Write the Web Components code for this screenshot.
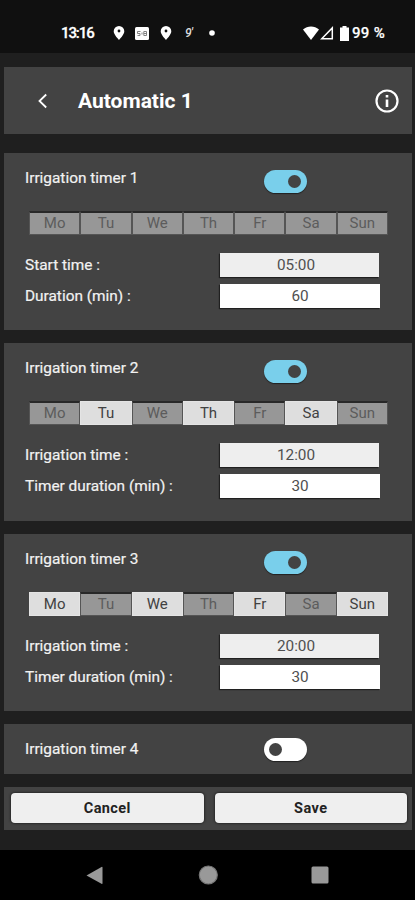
<!DOCTYPE html>
<html lang="en">
<head>
<meta charset="utf-8">
<meta name="viewport" content="width=device-width, initial-scale=1">
<title>Automatic 1</title>
<style>
    body {
        margin: 0;
        background: #1f1f1f;
        font-family: Roboto, "Liberation Sans", sans-serif;
    }
</style>
</head>
<body>
<irrigation-app>
    <status-bar slot="status" time="13:16" battery="99 %"></status-bar>
    <title-bar>Automatic 1</title-bar>
    <timer-card on days="" time="05:00" duration="60" time-label="Start time :" duration-label="Duration (min) :">Irrigation timer 1</timer-card>
    <timer-card on days="Tu,Th,Sa" time="12:00" duration="30">Irrigation timer 2</timer-card>
    <timer-card on days="Mo,We,Fr,Sun" time="20:00" duration="30">Irrigation timer 3</timer-card>
    <timer-card>Irrigation timer 4</timer-card>
    <action-bar slot="footer">
        <action-button>Cancel</action-button>
        <action-button>Save</action-button>
    </action-bar>
    <nav-bar slot="nav"></nav-bar>
</irrigation-app>

<script>
const DAYS = ['Mo', 'Tu', 'We', 'Th', 'Fr', 'Sa', 'Sun'];

function template(html){
    const t = document.createElement('template');
    t.innerHTML = html;
    return t;
}

class BaseElement extends HTMLElement{
    constructor(){
        super();
        this.attachShadow({mode: 'open'});
    }
    connectedCallback(){
        this.shadowRoot.innerHTML = "";
        this.shadowRoot.append(this.constructor.template.content.cloneNode(true));
        this.render();
    }
    $(selector){
        return this.shadowRoot.querySelector(selector);
    }
    render(){}
}

class IrrigationApp extends BaseElement{
    static template = template(`
        <style>
            :host {
                display: flex;
                flex-direction: column;
                box-sizing: border-box;
                width: 415px;
                height: 900px;
                overflow: hidden;
            }
            main {
                flex: 1;
                display: flex;
                flex-direction: column;
                gap: 13px;
                padding: 14px 3px 0 4px;
            }
        </style>
        <slot name="status"></slot>
        <main>
            <slot></slot>
            <slot name="footer"></slot>
        </main>
        <slot name="nav"></slot>
    `);
}

class StatusBar extends BaseElement{
    static template = template(`
        <style>
            :host {
                display: flex;
                align-items: center;
                box-sizing: border-box;
                height: 53px;
                padding: 13px 29px 0 61px;
                background: #101010;
                color: #fff;
                font-size: 15px;
                font-weight: 500;
            }
            .time { width: 52px; letter-spacing: -1.1px; -webkit-text-stroke: .3px; }
            .left { display: flex; align-items: center; flex: 1; }
            .alert { font-size: 12px; width: 23px; margin-left: 13px; letter-spacing: -.5px; margin-right: 1px; color: #ddd; font-style: italic; }
            .battery { letter-spacing: .3px; width: 34px; margin-left: 3px; white-space: nowrap; -webkit-text-stroke: .2px; }
            svg { display: block; fill: currentColor; }
        </style>
        <span class="time"></span>
        <div class="left">
            <svg width="12" height="16" viewBox="0 0 12 16"><path fill-rule="evenodd" d="M6 1a5.300 5.300 0 0 0-5.300 5.300c0 3.500 5.300 8.700 5.300 8.700s5.300-5.200 5.300-8.700a5.300 5.300 0 0 0-5.300-5.300zm0 3.600a1.400 1.400 0 1 1 0 2.800 1.400 1.400 0 0 1 0-2.800z"/></svg>
            <svg width="14" height="13" viewBox="0 0 14 13" style="margin: 0 11px 0 10px"><rect width="14" height="13" rx="1.500"/><path d="M5.500 4.500H2.500v2h2.500v2H2.500M7 5.500v2M11.500 4.500H8.800v4h2.700v-4M8.800 6.500h2.700" fill="none" stroke="#777" stroke-width=".9"/></svg>
            <svg width="12" height="16" viewBox="0 0 12 16"><path fill-rule="evenodd" d="M6 1a5.300 5.300 0 0 0-5.300 5.300c0 3.500 5.300 8.700 5.300 8.700s5.300-5.200 5.300-8.700a5.300 5.300 0 0 0-5.300-5.300zm0 3.600a1.400 1.400 0 1 1 0 2.800 1.400 1.400 0 0 1 0-2.800z"/></svg>
            <span class="alert">9'</span>
            <svg width="6" height="6" viewBox="0 0 6 6"><circle cx="3" cy="3" r="2.800"/></svg>
        </div>
        <svg width="16" height="14" viewBox="0 0 16 14"><path d="M0 3.500C4.500-.6 11.500-.6 16 3.500L8 14z"/></svg>
        <svg width="14" height="14" viewBox="0 0 14 14" style="margin: 0 6px 0 1px"><path d="M1.700 12.800H12.300V1.900z" fill="none" stroke="#fff" stroke-width="1.500"/></svg>
        <svg width="9" height="15" viewBox="0 0 9 15"><path d="M2.500 0h4v1.500H9V15H0V1.500h2.500z"/></svg>
        <span class="battery"></span>
    `);
    render(){
        this.$('.time').textContent = this.getAttribute('time');
        this.$('.battery').textContent = this.getAttribute('battery');
    }
}

class TitleBar extends BaseElement{
    static template = template(`
        <style>
            :host {
                display: flex;
                align-items: center;
                box-sizing: border-box;
                height: 67px;
                margin-bottom: 6px;
                padding: 0 13px 0 33px;
                background: #434343;
                color: #fff;
            }
            h1 {
                flex: 1;
                margin: 0;
                padding-left: 30px;
                font-size: 21px;
                font-weight: 700;
                line-height: 24px;
            }
            svg { display: block; fill: none; stroke: #fff; }
        </style>
        <svg width="11" height="16" viewBox="0 0 11 16"><path d="M9.200 1.500 2.500 8l6.700 6.500" stroke-width="1.800"/></svg>
        <h1><slot></slot></h1>
        <svg width="24" height="24" viewBox="0 0 24 24"><circle cx="12" cy="12" r="10.500" stroke-width="2.200"/><path d="M12 10.500V18M12 6v2.600" stroke-width="2.600"/></svg>
    `);
}

class ToggleSwitch extends BaseElement{
    static template = template(`
        <style>
            :host {
                display: flex;
                align-items: center;
                box-sizing: border-box;
                width: 43px;
                height: 23px;
                padding: 0 5px;
                border-radius: 12px;
                background: #fff;
                box-shadow: 0 1px 1px #222;
            }
            :host([on]) {
                justify-content: flex-end;
                padding-right: 6px;
                background: #79cfeb;
            }
            i {
                width: 13px;
                height: 13px;
                border-radius: 50%;
                background: #434343;
            }
        </style>
        <i></i>
    `);
}

class DayPicker extends BaseElement{
    static template = template(`
        <style>
            :host {
                display: grid;
                grid-template-columns: repeat(7, 1fr);
                height: 24px;
                color: #5c5c5c;
                font-size: 15px;
                text-align: center;
            }
            span {
                box-sizing: border-box;
                border: 1px solid #555;
                border-top: 2px solid #282828;
                background: #979797;
                line-height: 20px;
            }
            span.active {
                border: 1px solid #e4e4e4;
                background: #dedede;
                color: #414141;
                line-height: 22px;
            }
        </style>
    `);
    render(){
        const active = (this.getAttribute('days') || '').split(',');
        for(const day of DAYS){
            const cell = document.createElement('span');
            cell.textContent = day;
            cell.classList.toggle('active', active.includes(day));
            this.shadowRoot.append(cell);
        }
    }
}

class ValueField extends BaseElement{
    static template = template(`
        <style>
            :host {
                display: flex;
                align-items: center;
                height: 24px;
                color: #f2f2f2;
                font-size: 15.400px;
            }
            label { width: 195px; -webkit-text-stroke: .2px; white-space: nowrap; }
            output {
                box-sizing: border-box;
                width: 160px;
                height: 24px;
                background: #fff;
                box-shadow: -1px 1px 1px #202020;
                color: #505050;
                font-size: 15.300px;
                line-height: 24px;
                text-align: center;
            }
            :host([kind=time]) output {
                width: 159px;
                background: #eee;
                padding-right: 7px;
            }
        </style>
        <label></label><output></output>
    `);
    render(){
        this.$('label').textContent = this.getAttribute('label');
        this.$('output').textContent = this.getAttribute('value');
    }
}

class TimerCard extends BaseElement{
    static template = template(`
        <style>
            :host {
                display: block;
                box-sizing: border-box;
                height: 49.600px;
                padding: 14px 0 0 21px;
                background: #434343;
            }
            :host([days]) { height: 177.400px; padding-top: 17px; }
            header {
                display: flex;
                align-items: flex-start;
                height: 24px;
                color: #f2f2f2;
                font-size: 15.400px;
                line-height: 17px;
                -webkit-text-stroke: .2px;
            }
            .name { width: 239px; }
            :host(:not([days])) .name { padding-top: 3px; }
            day-picker { width: 359px; margin: 17px 0 18px 4px; }
            value-field + value-field { margin-top: 7px; }
        </style>
        <header><span class="name"><slot></slot></span><toggle-switch></toggle-switch></header>
        <div class="settings">
            <day-picker></day-picker>
            <value-field kind="time"></value-field>
            <value-field kind="duration"></value-field>
        </div>
    `);
    render(){
        this.$('toggle-switch').toggleAttribute('on', this.hasAttribute('on'));
        if(!this.hasAttribute('days')){
            this.$('.settings').remove();
            return;
        }
        this.fill('day-picker', {days: this.getAttribute('days')});
        this.fill('[kind=time]', {
            label: this.getAttribute('time-label') || 'Irrigation time :',
            value: this.getAttribute('time')
        });
        this.fill('[kind=duration]', {
            label: this.getAttribute('duration-label') || 'Timer duration (min) :',
            value: this.getAttribute('duration')
        });
    }
    // Swaps in a fresh copy so the child renders with its attributes
    fill(selector, attributes){
        const old = this.$(selector);
        const copy = old.cloneNode();
        for(const key in attributes){
            copy.setAttribute(key, attributes[key]);
        }
        old.replaceWith(copy);
    }
}

class ActionButton extends BaseElement{
    static template = template(`
        <style>
            :host { display: block; flex: 1; }
            button {
                display: block;
                width: 100%;
                height: 30px;
                padding: 0;
                border: 0;
                border-radius: 4px;
                background: #efefef;
                box-shadow: 0 0 2px 1px #2a2a2a;
                color: #222;
                font: 700 14.500px Roboto, "Liberation Sans", sans-serif;
                letter-spacing: .4px;
            }
        </style>
        <button><slot></slot></button>
    `);
}

class ActionBar extends BaseElement{
    static template = template(`
        <style>
            :host {
                display: flex;
                gap: 11px;
                box-sizing: border-box;
                height: 43px;
                padding: 6.500px 5px 0 7px;
                background: #434343;
            }
        </style>
        <slot></slot>
    `);
}

class NavBar extends BaseElement{
    static template = template(`
        <style>
            :host {
                display: flex;
                align-items: center;
                justify-content: space-between;
                box-sizing: border-box;
                height: 50px;
                padding: 0 86px;
                background: #000;
            }
            svg { display: block; fill: #999; }
        </style>
        <svg width="18" height="20" viewBox="0 0 18 20"><path d="M.5 10.500 15.500 2q1-.5 1 .7v15.600q0 1-1 .5z"/></svg>
        <svg width="20" height="20" viewBox="0 0 20 20"><circle cx="10.300" cy="10" r="9" stroke="#777" stroke-width="1.200"/></svg>
        <svg width="18" height="18" viewBox="0 0 18 18"><rect x=".5" y=".5" width="17" height="17" rx="1.500"/></svg>
    `);
}

customElements.define('status-bar', StatusBar)
customElements.define('title-bar', TitleBar)
customElements.define('toggle-switch', ToggleSwitch)
customElements.define('day-picker', DayPicker)
customElements.define('value-field', ValueField)
customElements.define('timer-card', TimerCard)
customElements.define('action-button', ActionButton)
customElements.define('action-bar', ActionBar)
customElements.define('nav-bar', NavBar)
customElements.define('irrigation-app', IrrigationApp)
</script>
</body>
</html>
